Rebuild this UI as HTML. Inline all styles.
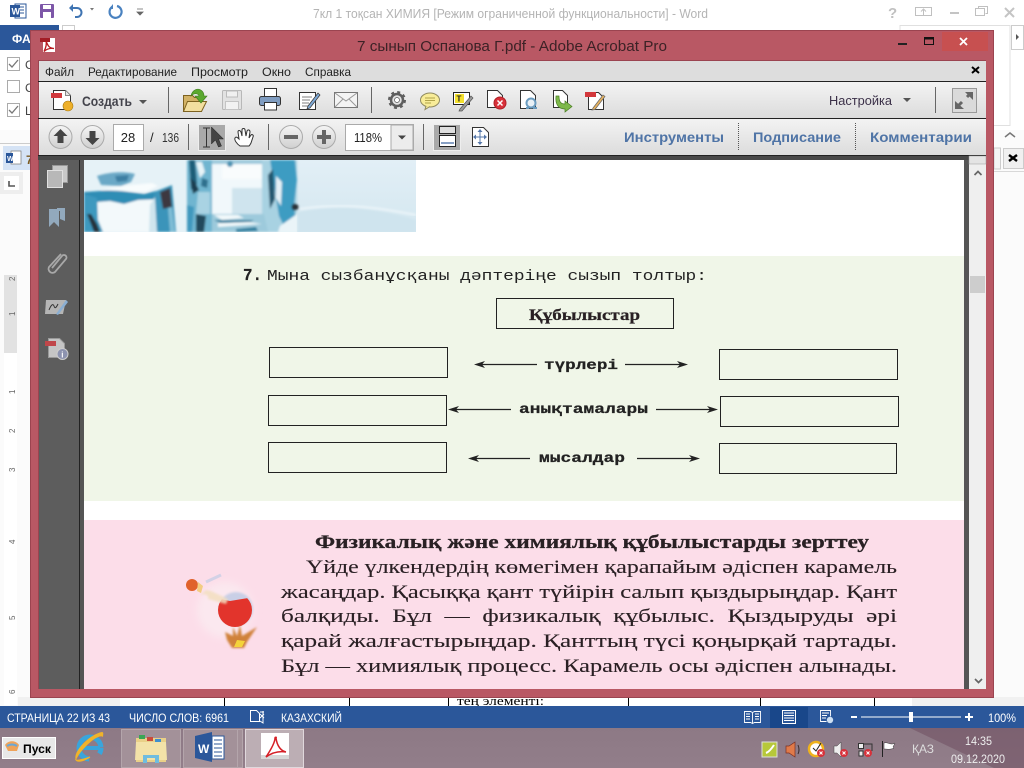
<!DOCTYPE html>
<html><head><meta charset="utf-8"><title>Acrobat</title>
<style>
html,body{margin:0;padding:0;width:1024px;height:768px;overflow:hidden;background:#fff}
svg{display:block;position:absolute;left:0;top:0}
text{font-family:"Liberation Sans",sans-serif;white-space:pre}
.s{font-family:"Liberation Serif",serif;fill:#2a2024;stroke:#2a2024;stroke-width:.12}
.m{font-family:"Liberation Mono",monospace;fill:#222}
.b{font-weight:bold;stroke:#222;stroke-width:.25}
</style></head><body>
<svg width="1024" height="768" viewBox="0 0 1024 768" xmlns="http://www.w3.org/2000/svg">
<defs>
<linearGradient id="tb" x1="0" y1="0" x2="0" y2="1"><stop offset="0" stop-color="#f3f3f3"/><stop offset="1" stop-color="#dcdcdc"/></linearGradient>
<linearGradient id="task" x1="0" y1="0" x2="0" y2="1"><stop offset="0" stop-color="#8d7985"/><stop offset="1" stop-color="#927e8a"/></linearGradient>
<linearGradient id="cir" x1="0" y1="0" x2="0" y2="1"><stop offset="0" stop-color="#f5f5f5"/><stop offset="1" stop-color="#cfcfcf"/></linearGradient>
<linearGradient id="ice" x1="0" y1="0" x2="0" y2="1"><stop offset="0" stop-color="#e2eff6"/><stop offset="1" stop-color="#d4e7f0"/></linearGradient>
<filter id="bl" x="-10%" y="-10%" width="120%" height="120%"><feGaussianBlur stdDeviation="1"/></filter>
<filter id="bl3" x="-30%" y="-30%" width="160%" height="160%"><feGaussianBlur stdDeviation="2.500"/></filter>
<filter id="bl2" x="-30%" y="-30%" width="160%" height="160%"><feGaussianBlur stdDeviation="4"/></filter>
<clipPath id="iceclip"><rect x="84" y="160" width="332" height="72"/></clipPath>
<clipPath id="flask"><circle cx="235" cy="610" r="17"/></clipPath>
</defs>

<!-- WORD background -->
<rect width="1024" height="768" fill="#fff"/>
<rect x="0" y="130" width="1024" height="576" fill="#fbfbfb"/>
<rect x="15" y="4" width="11" height="14" fill="#fff" stroke="#2b579a"/><path d="M18 7h6M18 10h6M18 13h6" stroke="#2b579a"/><rect x="10" y="5" width="10" height="12" fill="#2b579a"/><text x="11.500" y="14.500" font-size="9" font-weight="bold" fill="#fff">W</text>
<rect x="40" y="4" width="14" height="14" rx="1" fill="#7d57a8"/><rect x="43" y="5" width="8" height="4" fill="#fff"/><rect x="43" y="12" width="8" height="6" fill="#fff"/>
<path d="M71 8h6a4.500 4.500 0 0 1 0 9h-2" fill="none" stroke="#3f74b2" stroke-width="2"/><path d="M69 8l4-4v8z" fill="#3f74b2"/><path d="M90 8h4l-2 2.500z" fill="#777"/>
<path d="M112 7a6 6 0 1 0 5-1" fill="none" stroke="#4a82c0" stroke-width="2.200"/><path d="M113 4v5h-4z" fill="#4a82c0"/>
<path d="M137 9h6M137 12h6l-3 3z" stroke="#666" fill="#666" stroke-width="0.800"/>
<text x="313" y="18" font-size="13" fill="#b4b4b4" textLength="395" lengthAdjust="spacingAndGlyphs">7кл 1 тоқсан ХИМИЯ [Режим ограниченной функциональности] - Word</text>
<text x="888" y="18" font-size="15" font-weight="bold" fill="#c0c0c0">?</text>
<rect x="915.500" y="7.500" width="16" height="8" fill="none" stroke="#c0c0c0"/><path d="M923.500 15v-5M921 11.500l2.500-2.500 2.500 2.500" stroke="#c0c0c0" fill="none"/>
<rect x="950" y="12" width="9" height="2" fill="#c4c4c4"/>
<path d="M978.500 8.500v-2h9v7h-2M975.500 8.500h9v7h-9z" fill="none" stroke="#c0c0c0"/>
<path d="M1005 8l9 9M1014 8l-9 9" stroke="#c4c4c4" stroke-width="2"/>
<rect x="0" y="25" width="59" height="25" fill="#2b579a"/>
<text x="12" y="43" font-size="12" font-weight="bold" fill="#fff">ФА</text>
<rect x="62.500" y="25.500" width="12" height="8" fill="#fff" stroke="#ccc"/>
<rect x="900" y="25.500" width="110" height="100" fill="#fff" stroke="#e0e0e0"/>
<rect x="1011.500" y="25.500" width="12" height="24" fill="#fff" stroke="#ccc"/><path d="M1016 34l3 3-3 3z" fill="#555"/>
<path d="M1005 137l5-4 5 4" fill="none" stroke="#777" stroke-width="1.500"/>
<rect x="994" y="171" width="30" height="1" fill="#d8d8d8"/>
<rect x="994" y="148" width="6.500" height="21" fill="#f4f4f4" stroke="#ccc"/><rect x="1003.500" y="148.500" width="20" height="20" fill="#f0f0f0" stroke="#ccc"/>
<path d="M1009 155l8 6M1017 155l-8 6" stroke="#000" stroke-width="2.400"/>
<rect x="7.500" y="57.500" width="12" height="13" fill="#fff" stroke="#ababab"/><path d="M9 64l3 3 6-7" fill="none" stroke="#777" stroke-width="1.300"/>
<rect x="7.500" y="80.500" width="12" height="12" fill="#fff" stroke="#ababab"/>
<rect x="7.500" y="103.500" width="12" height="13" fill="#fff" stroke="#ababab"/><path d="M9 110l3 3 6-7" fill="none" stroke="#777" stroke-width="1.300"/>
<text x="25" y="69" font-size="12" fill="#444">С</text><text x="25" y="92" font-size="12" fill="#444">С</text><text x="25" y="115" font-size="12" fill="#444">Ц</text>
<rect x="0" y="143" width="30" height="1" fill="#ccc"/>
<rect x="3" y="146" width="27" height="24" fill="#d5e3f5"/>
<rect x="11" y="151" width="10" height="13" fill="#fff" stroke="#777" stroke-width="0.700"/><rect x="6" y="153" width="7" height="10" fill="#2b579a"/>
<text x="7" y="161" font-size="7" fill="#fff" font-weight="bold">W</text>
<text x="26" y="164" font-size="12" fill="#7a5a20" font-weight="bold">7</text>
<rect x="0" y="172" width="23" height="22" fill="#eee"/><rect x="4" y="176" width="15" height="14" fill="#fff"/><path d="M9 181v5h6" fill="none" stroke="#555" stroke-width="1.600"/>
<rect x="4" y="275" width="13" height="430" fill="#fff"/><rect x="4" y="275" width="13" height="78" fill="#e2e2e2"/>
<g font-size="8" fill="#666"><text transform="translate(15 277) rotate(-90)" x="-4">2</text><text transform="translate(15 314) rotate(-90)" x="-2">1</text><text transform="translate(15 392) rotate(-90)" x="-2">1</text><text transform="translate(15 431) rotate(-90)" x="-2">2</text><text transform="translate(15 470) rotate(-90)" x="-2">3</text><text transform="translate(15 542) rotate(-90)" x="-2">4</text><text transform="translate(15 618) rotate(-90)" x="-2">5</text><text transform="translate(15 692) rotate(-90)" x="-2">6</text></g>
<rect x="18" y="697" width="102" height="9" fill="#f1f1f1"/>
<rect x="120" y="697" width="792" height="9" fill="#fff"/><rect x="912" y="697" width="112" height="9" fill="#f1f1f1"/>
<path d="M224.500 697v9M349.500 697v9M448.500 697v9M628.500 697v9M760.500 697v9M874.500 697v9" stroke="#000"/>
<text x="457" y="705" font-size="13" style="font-family:'Liberation Serif',serif" fill="#000" textLength="87" lengthAdjust="spacingAndGlyphs">тең элементі:</text>

<!-- ACROBAT window -->
<rect x="30" y="30" width="964" height="667.500" fill="#b95864"/>
<path d="M30.500 30.500h963v667h-963z" fill="none" stroke="#9b4450"/>
<rect x="38" y="60" width="948" height="629" fill="#9b4450"/>
<rect x="942" y="32" width="46" height="19" fill="#c75050"/>
<path d="M960 38l7 7M967 38l-7 7" stroke="#fff" stroke-width="1.800"/>
<rect x="898" y="43" width="9" height="2" fill="#222"/>
<rect x="924.500" y="38.500" width="9" height="6" fill="none" stroke="#111"/><rect x="924" y="37" width="10" height="2.500" fill="#111"/>
<text x="357" y="51" font-size="15" fill="#3c2226" textLength="310" lengthAdjust="spacingAndGlyphs">7 сынып Оспанова Г.pdf - Adobe Acrobat Pro</text>
<rect x="43" y="38" width="12" height="14" fill="#fff"/><rect x="40" y="38" width="10" height="4" fill="#a31d25"/><path d="M46 41c2 5 3 7 8 7.500-4-.5-7 0-10 3 2-4 3-7 2-10.500z" fill="none" stroke="#b8191f" stroke-width="1.300"/>

<!-- menu -->
<rect x="39" y="61" width="947" height="20" fill="#dddddd"/>
<g font-size="12" fill="#222">
<text x="45" y="76" textLength="29" lengthAdjust="spacingAndGlyphs">Файл</text>
<text x="88" y="76" textLength="89" lengthAdjust="spacingAndGlyphs">Редактирование</text>
<text x="191" y="76" textLength="57" lengthAdjust="spacingAndGlyphs">Просмотр</text>
<text x="262" y="76" textLength="29" lengthAdjust="spacingAndGlyphs">Окно</text>
<text x="305" y="76" textLength="46" lengthAdjust="spacingAndGlyphs">Справка</text>
</g>
<path d="M972 67l7 6M979 67l-7 6" stroke="#000" stroke-width="2"/>
<rect x="38" y="81" width="948" height="1" fill="#222"/>
<rect x="39" y="82" width="947" height="36" fill="url(#tb)"/>
<rect x="38" y="118" width="948" height="1" fill="#222"/>
<rect x="39" y="119" width="947" height="36" fill="url(#tb)"/>

<!-- Create -->
<path d="M53.500 90.500h12l5 5v14h-17z" fill="#fff" stroke="#333"/><path d="M65.500 90.500v5h5" fill="#e6e6e6" stroke="#888"/><rect x="51" y="93" width="11" height="5" fill="#d0383c"/><circle cx="68" cy="106" r="5" fill="#eeb02a" stroke="#a97a10" stroke-width="0.600"/>
<text x="82" y="106" font-size="14" font-weight="bold" fill="#44444c" textLength="50" lengthAdjust="spacingAndGlyphs">Создать</text>
<path d="M139 100h8l-4 4z" fill="#555"/>
<path d="M168.500 87v26M371.500 87v26M935.500 87v26" stroke="#666"/>
<!-- open -->
<path d="M183.500 95.500h9l2 2h7v14h-18z" fill="#d2b266" stroke="#7d6220"/><path d="M183.500 111.500l4-10h19l-5 10z" fill="#f2de9f" stroke="#7d6220"/>
<path d="M191 96c1-6 7-9 11-5 2 2 2 4 2 5h3l-6 7-6-7h4c-1-3-5-3-8 0z" fill="#5aa82f" stroke="#3f7a1e" stroke-width="0.600"/>
<!-- save dis -->
<rect x="222.500" y="90.500" width="19" height="19" rx="1" fill="#e2e2e2" stroke="#b8b8b8"/><rect x="226.500" y="91" width="11" height="6" fill="#f0f0f0" stroke="#bbb"/><rect x="225.500" y="101.500" width="13" height="8" fill="#f2f2f2" stroke="#c4c4c4"/>
<!-- print -->
<rect x="264.500" y="88.500" width="12" height="8" fill="#fff" stroke="#333"/><rect x="259.500" y="96.500" width="21" height="9" rx="2" fill="#7f9cc0" stroke="#333"/><rect x="264.500" y="102.500" width="12" height="7.500" fill="#fff" stroke="#333"/>
<!-- edit doc -->
<rect x="299.500" y="92.500" width="16" height="17" fill="#fff" stroke="#333"/><path d="M302 97h10M302 100h8M302 103h7M302 106h9" stroke="#555" stroke-width="0.700"/><path d="M308 106l10-13 2 2-10 13-3 1z" fill="#7fa9d6" stroke="#333" stroke-width="0.700"/>
<!-- mail -->
<rect x="334.500" y="92.500" width="23" height="15" fill="#f4f4f4" stroke="#777"/><path d="M335 93l11 8 11-8M335 107l8-8M357 107l-8-8" fill="none" stroke="#999"/>
<!-- gear -->
<circle cx="397" cy="100" r="6" fill="#e4e4e4" stroke="#5e5e5e" stroke-width="2.500"/><circle cx="397" cy="100" r="8" fill="none" stroke="#5e5e5e" stroke-width="2" stroke-dasharray="3 3.280"/><circle cx="397" cy="100" r="2.500" fill="#fff" stroke="#555" stroke-width=".7"/>
<!-- comment -->
<ellipse cx="430" cy="100" rx="9.500" ry="7" fill="#f8ec98" stroke="#8f8a60"/><path d="M426 106l-1 3.500 5-3" fill="#f8ec98" stroke="#8f8a60"/><path d="M425 98h10M425 100.500h10M425 103h6" stroke="#998a30" stroke-width="0.700"/>
<!-- highlight -->
<rect x="453.500" y="92.500" width="16" height="12" fill="#fff" stroke="#222"/><rect x="455" y="94" width="9" height="9" fill="#f4e02c"/><text x="456.500" y="101.500" font-size="8" font-weight="bold" fill="#222">T</text><path d="M460 109l11-13 2 2-11 13-3 0z" fill="#9a9a9a" stroke="#555" stroke-width="0.700"/>
<!-- doc x -->
<path d="M487.500 90.500h10l5 5v12h-15z" fill="#fff" stroke="#333"/><circle cx="500" cy="103" r="6" fill="#d8313a" stroke="#b02026"/><path d="M497.500 100.500l5 5M502.500 100.500l-5 5" stroke="#fff" stroke-width="1.500"/>
<!-- doc search -->
<path d="M520.500 90.500h10l5 5v13h-15z" fill="#fff" stroke="#333"/><circle cx="531" cy="103" r="4.500" fill="#e8f0f6" stroke="#6b9cc0" stroke-width="2"/><path d="M526 108h3M533 108h4" stroke="#6b9cc0" stroke-width="2"/>
<!-- doc arrow -->
<path d="M553.500 90.500h9l5 5v12h-14z" fill="#fff" stroke="#333"/><path d="M559 96c0 6 2 8 6 8v-3l7 5.500-7 5.500v-3c-6 0-10-4-9-13z" fill="#7db84a" stroke="#4b7d25" stroke-width="0.700"/>
<!-- doc pencil -->
<path d="M588.500 92.500h10l5 5v12h-15z" fill="#fff" stroke="#333"/><rect x="585" y="92" width="11" height="5" fill="#d3383c"/><path d="M593 108l10-13 2 1.500-10 13-3 .500z" fill="#e6b25f" stroke="#666" stroke-width="0.700"/>
<text x="829" y="105" font-size="13" fill="#3b3048" textLength="63" lengthAdjust="spacingAndGlyphs">Настройка</text>
<path d="M903 98h8l-4 4z" fill="#555"/>
<rect x="952.500" y="88.500" width="24" height="24" fill="#dadada" stroke="#999"/><path d="M965 92h8v8zM964 109h-9v-8z" fill="#666"/><path d="M958 106l4-4M967 97l3-3" stroke="#666" stroke-width="3"/>

<!-- nav row -->
<g stroke="#aaa" fill="url(#cir)"><circle cx="60.500" cy="137" r="11.500"/><circle cx="92.500" cy="137" r="11.500"/><circle cx="291" cy="137" r="11.500"/><circle cx="324" cy="137" r="11.500"/></g>
<path d="M60.500 129l7 7h-4v7h-6v-7h-4z" fill="#444"/><path d="M92.500 145l7-7h-4v-7h-6v7h-4z" fill="#444"/>
<rect x="284" y="135" width="14" height="4" fill="#666"/><path d="M322 130h4v5h5v4h-5v5h-4v-5h-5v-4h5z" fill="#666"/>
<rect x="113.500" y="124.500" width="30" height="26" fill="#fff" stroke="#aaa"/>
<text x="128" y="142" font-size="13" text-anchor="middle" fill="#222">28</text>
<text x="150" y="142" font-size="13" fill="#222">/</text>
<text x="162" y="142" font-size="13" fill="#333" textLength="17" lengthAdjust="spacingAndGlyphs">136</text>
<path d="M188.500 124v26M268.500 124v26M423.500 124v26" stroke="#666"/>
<rect x="198.500" y="124.500" width="27" height="26" fill="#a9a9a9" stroke="#eee"/>
<path d="M203 128h7M203 147h7M206.500 128v19" stroke="#333" stroke-width="1"/>
<path d="M211.500 127v17l4-4 3 7 3-1-3-7h5z" fill="#444" stroke="#222" stroke-width="0.500"/>
<path d="M240 146c-3-2-6-6-5-8 1-2 3 0 4 1l-1-7c0-2 2-2 3 0l1 4 0-6c0-2 3-2 3 0l1 6 1-5c1-2 3-1 3 1l-1 6 2-3c1-1 3 0 2 2l-2 6c-1 2-2 3-2 3z" fill="#fff" stroke="#333"/>
<rect x="345.500" y="124.500" width="68" height="26" fill="#fff" stroke="#aaa"/>
<rect x="391" y="125" width="22" height="25" fill="#ececec" stroke="#aaa"/>
<path d="M398 135.500h8l-4 4z" fill="#444"/>
<text x="354" y="142" font-size="13" fill="#222" textLength="28" lengthAdjust="spacingAndGlyphs">118%</text>
<rect x="433.500" y="124.500" width="27" height="26" fill="#a9a9a9" stroke="#eee"/>
<rect x="439.500" y="126.500" width="16" height="7" fill="#dedede" stroke="#222"/><rect x="439.500" y="135.500" width="16" height="11" fill="#fff" stroke="#222"/><path d="M441 143h13" stroke="#5577aa" stroke-width="1.400"/>
<path d="M472.500 127.500h11l5 5v14h-16z" fill="#fff" stroke="#333"/><path d="M480 131v12M474 137h12" stroke="#5577aa"/><path d="M480 129l-2.500 3h5zM480 145l-2.500-3h5zM473 137l3-2.500v5zM487 137l-3-2.500v5z" fill="#5577aa"/>
<g font-size="14" font-weight="bold" fill="#4f74a6">
<text x="624" y="142" textLength="100" lengthAdjust="spacingAndGlyphs">Инструменты</text>
<text x="753" y="142" textLength="88" lengthAdjust="spacingAndGlyphs">Подписание</text>
<text x="870" y="142" textLength="102" lengthAdjust="spacingAndGlyphs">Комментарии</text>
</g>
<path d="M738.500 123v27M855.500 123v27" stroke="#555" stroke-dasharray="1 1"/>

<!-- side panel & canvas -->
<rect x="39" y="156" width="40" height="533" fill="#5d5d5d"/>
<rect x="79" y="156" width="1" height="533" fill="#222"/>
<rect x="80" y="156" width="889" height="533" fill="#555"/>
<rect x="38" y="155" width="948" height="5" fill="#484848"/>
<rect x="38" y="155" width="948" height="1" fill="#222"/>
<path d="M52.500 165.500h15v17h-15z" fill="#c9c9c9" stroke="#999"/><path d="M47.500 170.500h15v17h-15z" fill="#b8b8b8" stroke="#e0e0e0"/>
<path d="M49 209h8v-1h8v13l-5-2v-8h-1v16l-5-5-5 5z" fill="#92a9bd"/>
<path d="M61 254l-12 13a4 4 0 0 0 6 5l11-13a2.500 2.500 0 0 0-4-3l-10 12" fill="none" stroke="#a8a8a8" stroke-width="1.800"/>
<path d="M46 300h20l-3 14h-18z" fill="#b5b5b5"/><path d="M49 310c2-5 4-7 5-4s2 2 4-2" fill="none" stroke="#333"/><path d="M56 314l10-14 2 2-10 13z" fill="#8aaed2"/>
<path d="M48.500 338.500h11l5 5v14h-16z" fill="#c5c5c5" stroke="#999"/><rect x="45" y="341" width="11" height="5" fill="#c0474a"/><circle cx="62.500" cy="354" r="5.500" fill="#8d93b0" stroke="#ccc"/><text x="61.300" y="357.500" font-size="8" font-weight="bold" fill="#fff">i</text>

<!-- PDF page -->
<rect x="84" y="160" width="880" height="529" fill="#fff"/>
<!-- ice -->
<g clip-path="url(#iceclip)">
<rect x="84" y="160" width="332" height="72" fill="url(#ice)"/>
<rect x="84" y="160" width="213" height="72" fill="#e6f2f7"/>
<g filter="url(#bl)">
<rect x="98" y="200" width="56" height="32" fill="#f3f9fb"/>
<path d="M97 176c12-4 28-5 38-2l-4 8-10 4-20-1z" fill="#6aa8c6"/>
<path d="M115 176l14-1-2 6-10 1z" fill="#3d7fa3"/>
<path d="M84 192l30-2 30 4 12-3 2 8-20 1-14 4-14-3-26 2z" fill="#2f8db5"/>
<path d="M100 190l46 2 12-6-6-3-30 3z" fill="#f8fcfd"/>
<path d="M84 194l13 4 1 22 5 12H84z" fill="#3d99bf"/>
<path d="M87 214l4 0 6 10 3 8h-6z" fill="#26323a"/>
<path d="M154 192l18-7 4 47h-26l4-26z" fill="#3a94ba"/>
<path d="M160 192l10-4 2 19-9 2z" fill="#3d3840"/>
<path d="M150 205l5-8 2 35h-8z" fill="#cfe5ee"/>
<path d="M168 208l4-1 3 25h-5z" fill="#7fbdd6"/>
<path d="M187 160h25v72h-25z" fill="#6fb5d0"/>
<path d="M189 160h6l2 24-6 6z" fill="#1d5d78"/>
<path d="M196 162h6l3 10-5 6z" fill="#e8f4f8"/>
<path d="M190 178l5 4 4 8-6 4z" fill="#1b3e50"/>
<path d="M202 178l6 2-1 8-6-2z" fill="#2d6f8d"/>
<path d="M198 192h12v22h-14z" fill="#a9d3e3"/>
<path d="M196 214l10 2-2 16h-8z" fill="#23485c"/>
<path d="M187 205l7 2-2 25h-5z" fill="#3f98bd"/>
<rect x="212" y="162" width="52" height="52" fill="#f1f8fb"/>
<rect x="232" y="188" width="32" height="26" fill="#cfe4ee"/>
<path d="M222 163h40v16h-40z" fill="#f9fcfd"/>
<path d="M212 160h60v4h-60z" fill="#9cc9dc"/><circle cx="230" cy="164" r="3" fill="#4e93b3"/>
<path d="M262 160h35v72h-35z" fill="#a8d2e2"/>
<path d="M270 160h25l2 20-3 26 3 26h-10l-8-16z" fill="#3d9cc2"/>
<path d="M268 175l5-6 2 30-5 10z" fill="#23566e"/>
<path d="M276 176l6 6-1 24-5-8z" fill="#e5f1f6"/>
<path d="M212 214h52l4 18h-56z" fill="#9dcadc"/>
<path d="M214 215h24l6 3-22 2zM218 223l30-1 14 2-44 3z" fill="#f3f9fb"/>
<path d="M214 220l40 0-4 2-30 1zM236 229l20-2 2 4-22 1z" fill="#2f7f9f"/>
<circle cx="295" cy="207" r="3.500" fill="#2a3238"/>
<path d="M280 226l17-12v18h-19z" fill="#eaf4f8"/>
</g>
<path d="M298 212c40-8 80-4 118 8v12H298z" fill="#cfe4ee" filter="url(#bl)"/>
<path d="M300 209c40-6 70-3 116 6" fill="none" stroke="#ecf5f9" stroke-width="2" filter="url(#bl)"/>
</g>
<!-- green -->
<rect x="84" y="256" width="880" height="245" fill="#f0f6e8"/>
<text x="243" y="280" class="m b" font-size="17" textLength="19" lengthAdjust="spacingAndGlyphs">7.</text>
<text x="267" y="280" class="m" font-size="15" textLength="440" lengthAdjust="spacingAndGlyphs">Мына сызбанұсқаны дәптеріңе сызып толтыр:</text>
<g fill="none" stroke="#222" stroke-width="1">
<rect x="496.500" y="298.500" width="177" height="30"/>
<rect x="269.500" y="347.500" width="178" height="30"/>
<rect x="268.500" y="395.500" width="178" height="30"/>
<rect x="268.500" y="442.500" width="178" height="30"/>
<rect x="719.500" y="349.500" width="178" height="30"/>
<rect x="720.500" y="396.500" width="178" height="30"/>
<rect x="719.500" y="443.500" width="177" height="30"/>
<path d="M480 364.500h57M625 364.500h57M453 409.500h58M656 409.500h56M473 458.500h57M637 458.500h58" stroke-width="1.200"/>
</g>
<g fill="#222">
<path d="M474 364.500l11-3.500-3 3.500 3 3.500zM688 364.500l-11-3.500 3 3.500-3 3.500z"/>
<path d="M448 409.500l11-3.500-3 3.500 3 3.500zM718 409.500l-11-3.500 3 3.500-3 3.500z"/>
<path d="M468 458.500l11-3.500-3 3.500 3 3.500zM700 458.500l-11-3.500 3 3.500-3 3.500z"/>
</g>
<text x="529" y="320" class="s b" font-size="16" textLength="111" lengthAdjust="spacingAndGlyphs">Құбылыстар</text>
<text x="544" y="369" class="m b" font-size="14" textLength="74" lengthAdjust="spacingAndGlyphs">түрлері</text>
<text x="519" y="413" class="m b" font-size="14" textLength="129" lengthAdjust="spacingAndGlyphs">анықтамалары</text>
<text x="539" y="462" class="m b" font-size="14" textLength="86" lengthAdjust="spacingAndGlyphs">мысалдар</text>
<!-- pink -->
<rect x="84" y="520" width="880" height="169" fill="#fcdde9"/>
<text x="315" y="548" class="s b" font-size="19" textLength="554" lengthAdjust="spacingAndGlyphs">Физикалық және химиялық құбылыстарды зерттеу</text>
<text class="s" font-size="19" x="306" y="573" textLength="591" lengthAdjust="spacingAndGlyphs">Үйде үлкендердің көмегімен қарапайым әдіспен карамель</text>
<text class="s" font-size="19" x="281" y="598" textLength="616" lengthAdjust="spacingAndGlyphs">жасаңдар. Қасыққа қант түйірін салып қыздырыңдар. Қант</text>
<text class="s" font-size="19" x="281" y="622" textLength="616" lengthAdjust="spacingAndGlyphs">балқиды.  Бұл  —  физикалық  құбылыс.  Қыздыруды  әрі</text>
<text class="s" font-size="19" x="281" y="647" textLength="616" lengthAdjust="spacingAndGlyphs">қарай жалғастырыңдар. Қанттың түсі қоңырқай тартады.</text>
<text class="s" font-size="19" x="281" y="672" textLength="616" lengthAdjust="spacingAndGlyphs">Бұл — химиялық процесс. Карамель осы әдіспен алынады.</text>
<!-- flask -->
<circle cx="225" cy="610" r="28" fill="#fbe8ef" filter="url(#bl2)"/>
<circle cx="236" cy="609" r="17" fill="#c9cfe6" filter="url(#bl)"/>
<g clip-path="url(#flask)"><path d="M200 595l30 6 30-5v35h-60z" fill="#e2342c"/></g>
<path d="M200 595c5-2 9 0 8 4l18 5 2-5-17-8-5-1z" fill="#f3dfc0" opacity=".85" filter="url(#bl)"/>
<ellipse cx="192" cy="585" rx="6" ry="6" fill="#e0612b"/>
<path d="M198 582l5 4-2 7-4-2z" fill="#f3cd82"/>
<path d="M206 582l15-7" stroke="#c9cfe6" stroke-width="3" opacity=".8"/>
<path d="M233 627l4 9 3-11 2 11 15-9-10 15-3 6h-12l-5-8-2-8 8 4z" fill="#d0823a" filter="url(#bl)"/>
<path d="M237 640l8 1-3 6h-8z" fill="#f4d33a"/>

<!-- scrollbar -->
<rect x="969" y="156" width="17" height="533" fill="#efefef"/>
<rect x="969" y="156" width="17" height="8" fill="#e4e4e4" stroke="#999" stroke-width="0.500"/>
<path d="M974.500 175l3.500-3.500 3.500 3.500" fill="none" stroke="#666" stroke-width="1.700"/>
<rect x="970" y="276" width="15" height="17" fill="#cdcdcd"/>
<path d="M975 679l3.500 3.500 3.500-3.500" fill="none" stroke="#666" stroke-width="1.700"/>

<!-- status bar -->
<rect x="0" y="706" width="1024" height="22" fill="#2b579a"/>
<g font-size="12" fill="#fff">
<text x="7" y="722" textLength="103" lengthAdjust="spacingAndGlyphs">СТРАНИЦА 22 ИЗ 43</text>
<text x="129" y="722" textLength="100" lengthAdjust="spacingAndGlyphs">ЧИСЛО СЛОВ: 6961</text>
<text x="281" y="722" textLength="61" lengthAdjust="spacingAndGlyphs">КАЗАХСКИЙ</text>
<text x="988" y="722" textLength="28" lengthAdjust="spacingAndGlyphs">100%</text>
</g>
<path d="M250.500 710.500h6l3 3v8h-9zM263 711v12l-3-2M260 712h4" fill="none" stroke="#fff"/><path d="M260 714l4 4M264 714l-4 4" stroke="#fff"/>
<rect x="770" y="707" width="38" height="21" fill="#19478a"/>
<path d="M744.500 711.500h6l2 1 2-1h6v11h-6l-2 1-2-1h-6zM752.500 712v11M746 714h4M746 716.500h4M746 719h4M755 714h4M755 716.500h4M755 719h4" fill="none" stroke="#fff" stroke-width="0.900"/>
<rect x="782.500" y="710.500" width="13" height="13" fill="#2b579a" stroke="#fff"/><path d="M784 713h10M784 715.500h10M784 718h10M784 720.500h10" stroke="#fff"/>
<path d="M820.500 710.500h10v11h-10zM822 713h7M822 715.500h5M822 718h4" fill="none" stroke="#fff" stroke-width="0.900"/><circle cx="830" cy="720" r="3.500" fill="#cfe0f2" stroke="#2b579a" stroke-width="0.600"/>
<rect x="851" y="716" width="6" height="2" fill="#fff"/><rect x="861" y="716.500" width="100" height="1" fill="#fff"/><rect x="909" y="712" width="4" height="10" fill="#fff"/>
<path d="M965 717h8M969 713v8" stroke="#fff" stroke-width="2"/>

<!-- taskbar -->
<rect x="0" y="728" width="1024" height="40" fill="url(#task)"/>
<path d="M910 728h114v40h-30z" fill="#6f4e60" opacity=".55"/>
<rect x="2.500" y="737.500" width="53" height="21" fill="#e8e8e8" stroke="#fff"/>
<path d="M5 745c3-5 11-5 14 0l-2 6h-9z" fill="#efa35a"/><path d="M7 746c3-2 7-2 10 0" stroke="#6ba7d6" stroke-width="2" fill="none"/>
<text x="23" y="753" font-size="12" font-weight="bold" fill="#000" textLength="28" lengthAdjust="spacingAndGlyphs">Пуск</text>
<!-- IE -->
<ellipse cx="90" cy="748" rx="11" ry="11" fill="none" stroke="#39a5dc" stroke-width="5" stroke-dasharray="50 12" stroke-dashoffset="-18"/>
<path d="M80 748h20" stroke="#39a5dc" stroke-width="4"/>
<path d="M76 760c-4-8 14-26 26-28 2 0 1 3 1 5-5-4-22 12-27 23z" fill="#f0b32a"/>
<path d="M76 760c2 3 10 0 14-3-6 2-11 4-14 3z" fill="#f0b32a" stroke="#f0b32a"/>
<!-- buttons -->
<rect x="121.500" y="729.500" width="59" height="38" fill="#a39199" stroke="#b4a5ab"/>
<rect x="183.500" y="729.500" width="54" height="38" fill="#a39199" stroke="#b4a5ab"/><rect x="237.500" y="729.500" width="5" height="38" fill="#a39199" stroke="#b4a5ab"/>
<rect x="245.500" y="729.500" width="58" height="38" fill="#bcaeb4" stroke="#e0d8dc"/>
<path d="M136 738h30v24h-30z" fill="#e9d088"/><rect x="139" y="735" width="6" height="4" fill="#3aa655"/><rect x="147" y="737" width="6" height="4" fill="#c94a3a"/><rect x="155" y="739" width="6" height="4" fill="#3f8fce"/>
<path d="M136 742h30l1 18h-32z" fill="#f3e2a8"/>
<path d="M143 763v-8h16v8h-4v-5h-8v5z" fill="#6fbce0"/>
<path d="M195 736l17-4v30l-17-4z" fill="#2b579a"/><rect x="212" y="736" width="12" height="23" fill="#fff" stroke="#2b579a"/><path d="M214 740h8M214 744h8M214 748h8M214 752h8M214 756h8" stroke="#2b579a"/>
<text x="198" y="753" font-size="12" font-weight="bold" fill="#fff">W</text>
<rect x="261" y="733" width="28" height="26" fill="#fff"/><rect x="261" y="755" width="28" height="4" fill="#d8d8d8"/>
<path d="M276 738c1 8 5 13 10 14-6-1-13 0-20 5 4-6 9-14 9-19 0-1 2-1 1 0z" fill="none" stroke="#d52027" stroke-width="1.500"/>
<!-- tray -->
<rect x="762" y="742" width="15" height="15" fill="#b7c83a" stroke="#ddd"/><path d="M766 753c3-1 6-5 8-8" stroke="#fff" stroke-width="2"/>
<path d="M786 746h3l6-4v15l-6-4h-3z" fill="#e07a4a" stroke="#7a2f22" stroke-width="0.700"/><path d="M798 745q2 5 0 9" fill="none" stroke="#3a2a2a"/>
<circle cx="816" cy="749" r="7" fill="#fff" stroke="#efb21c" stroke-width="2.500"/><path d="M813 748l3 3 5-8" stroke="#222" fill="none"/><circle cx="821" cy="753" r="4" fill="#d8313a"/><path d="M819.500 751.500l3 3M822.500 751.500l-3 3" stroke="#fff"/>
<path d="M834 746h3l4-4v15l-4-4h-3z" fill="#eee" stroke="#444" stroke-width="0.500"/><circle cx="844" cy="753" r="4" fill="#d8313a"/><path d="M842.500 751.500l3 3M845.500 751.500l-3 3" stroke="#fff"/>
<rect x="858.500" y="743.500" width="5" height="5" fill="#eee" stroke="#333"/><rect x="859" y="751" width="4" height="5" fill="#eee" stroke="#333"/><path d="M863 744h9v7" fill="none" stroke="#333"/><circle cx="868" cy="753" r="4" fill="#d8313a"/><path d="M866.500 751.500l3 3M869.500 751.500l-3 3" stroke="#fff"/>
<path d="M882.500 741v16" stroke="#222"/><path d="M884 743c3-1 5 1 8 1 1 0 2-.500 3-1l-2 4 1 1c-4 2-7 1-10 1z" fill="#fff" stroke="#333" stroke-width="0.500"/>
<text x="912" y="753" font-size="12" fill="#ddd" textLength="22" lengthAdjust="spacingAndGlyphs">ҚАЗ</text>
<text x="965" y="745" font-size="12" fill="#eee" textLength="27" lengthAdjust="spacingAndGlyphs">14:35</text>
<text x="951" y="763" font-size="12" fill="#eee" textLength="54" lengthAdjust="spacingAndGlyphs">09.12.2020</text>
</svg>
</body></html>
